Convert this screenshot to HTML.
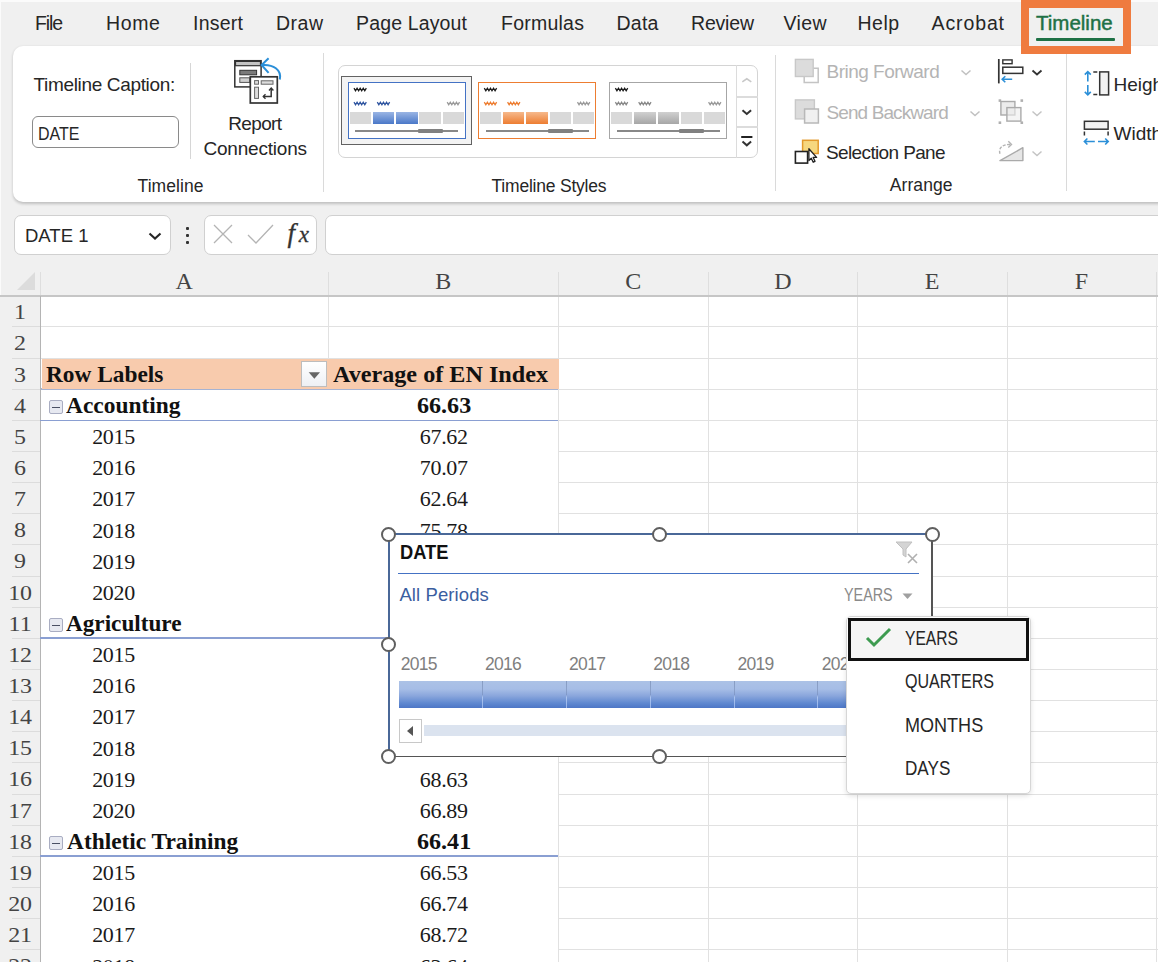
<!DOCTYPE html>
<html><head><meta charset="utf-8"><style>
html,body{margin:0;padding:0;width:1158px;height:962px;overflow:hidden;background:#f0f0f0}
.b{position:absolute}
.t{position:absolute;white-space:nowrap}
</style></head><body>
<div class="b" style="left:0;top:0;width:1158px;height:962px;background:#f0f0f0"></div>
<div class="b" style="left:0.0px;top:0.0px;width:1158.0px;height:2.0px;background:#fbfbfb"></div>
<div class="b" style="left:0.0px;top:0.0px;width:1.0px;height:962.0px;background:#fbfbfb"></div>
<div class="t" style="left:35.0px;top:14.0px;font-size:19.5px;line-height:19.5px;color:#262626;font-weight:normal;font-family:'Liberation Sans', sans-serif;letter-spacing:-1.13px;">File</div>
<div class="t" style="left:106.0px;top:14.0px;font-size:19.5px;line-height:19.5px;color:#262626;font-weight:normal;font-family:'Liberation Sans', sans-serif;letter-spacing:0.64px;">Home</div>
<div class="t" style="left:193.0px;top:14.0px;font-size:19.5px;line-height:19.5px;color:#262626;font-weight:normal;font-family:'Liberation Sans', sans-serif;letter-spacing:0.25px;">Insert</div>
<div class="t" style="left:276.0px;top:14.0px;font-size:19.5px;line-height:19.5px;color:#262626;font-weight:normal;font-family:'Liberation Sans', sans-serif;letter-spacing:0.49px;">Draw</div>
<div class="t" style="left:356.0px;top:14.0px;font-size:19.5px;line-height:19.5px;color:#262626;font-weight:normal;font-family:'Liberation Sans', sans-serif;letter-spacing:0.15px;">Page Layout</div>
<div class="t" style="left:501.0px;top:14.0px;font-size:19.5px;line-height:19.5px;color:#262626;font-weight:normal;font-family:'Liberation Sans', sans-serif;letter-spacing:0.24px;">Formulas</div>
<div class="t" style="left:616.5px;top:14.0px;font-size:19.5px;line-height:19.5px;color:#262626;font-weight:normal;font-family:'Liberation Sans', sans-serif;letter-spacing:0.25px;">Data</div>
<div class="t" style="left:691.0px;top:14.0px;font-size:19.5px;line-height:19.5px;color:#262626;font-weight:normal;font-family:'Liberation Sans', sans-serif;letter-spacing:-0.19px;">Review</div>
<div class="t" style="left:783.5px;top:14.0px;font-size:19.5px;line-height:19.5px;color:#262626;font-weight:normal;font-family:'Liberation Sans', sans-serif;letter-spacing:0.36px;">View</div>
<div class="t" style="left:857.5px;top:14.0px;font-size:19.5px;line-height:19.5px;color:#262626;font-weight:normal;font-family:'Liberation Sans', sans-serif;letter-spacing:0.48px;">Help</div>
<div class="t" style="left:931.5px;top:14.0px;font-size:19.5px;line-height:19.5px;color:#262626;font-weight:normal;font-family:'Liberation Sans', sans-serif;letter-spacing:0.89px;">Acrobat</div>
<div class="b" style="left:12.5px;top:45.5px;width:1160.0px;height:156.0px;background:#fff;border-radius:10px;box-shadow:0 1.5px 3px rgba(0,0,0,0.2)"></div>
<div class="b" style="left:1021.0px;top:0.0px;width:110.0px;height:54.0px;background:#ef7b3f"></div>
<div class="b" style="left:1028.6px;top:8.0px;width:94.4px;height:37.7px;background:#f0f0f0"></div>
<div class="t" style="left:1036.3px;top:13.8px;font-size:19.5px;line-height:19.5px;color:#1e7145;font-weight:normal;font-family:'Liberation Sans', sans-serif;letter-spacing:0px;-webkit-text-stroke:0.45px #1e7145;transform:scaleX(1.0517);transform-origin:0 0;">Timeline</div>
<div class="b" style="left:1036.0px;top:38.2px;width:78.5px;height:3.0px;background:#1e7145;border-radius:1px"></div>
<div class="t" style="left:33.5px;top:75.3px;font-size:19px;line-height:19px;color:#262626;font-weight:normal;font-family:'Liberation Sans', sans-serif;letter-spacing:-0.34px;">Timeline Caption:</div>
<div class="b" style="left:32.0px;top:116.3px;width:146.6px;height:31.8px;background:#fff;border:1px solid #8a8a8a;border-radius:6px;box-sizing:border-box"></div>
<div class="t" style="left:37.6px;top:123.7px;font-size:19px;line-height:19px;color:#262626;font-weight:normal;font-family:'Liberation Sans', sans-serif;letter-spacing:0px;transform:scaleX(0.8417);transform-origin:0 0;">DATE</div>
<div class="b" style="left:190.0px;top:63.0px;width:1.0px;height:96.0px;background:#d6d6d6"></div>
<svg class="b" style="left:225px;top:50px" width="65" height="60" viewBox="0 0 65 60">
<rect x="9.8" y="10.7" width="26.3" height="26.2" fill="#fff" stroke="#333" stroke-width="1.5"/>
<rect x="10.5" y="11.4" width="25" height="4.3" fill="#c4c4c4" stroke="#333" stroke-width="1.2"/>
<rect x="14.8" y="20.3" width="16.8" height="4.5" fill="#7a7a7a" stroke="#333" stroke-width="1"/>
<rect x="14.8" y="27.8" width="10" height="4.6" fill="#d0d0d0" stroke="#555" stroke-width="1"/>
<rect x="25.3" y="26.8" width="27" height="26.2" fill="#fff" stroke="#333" stroke-width="1.7"/>
<rect x="29.6" y="30.6" width="3.9" height="3.6" fill="#ddd" stroke="#666" stroke-width="1"/>
<rect x="36.2" y="30.8" width="11.8" height="3.4" fill="#ddd" stroke="#666" stroke-width="1"/>
<rect x="29.6" y="37.2" width="3.9" height="11.2" fill="#ddd" stroke="#666" stroke-width="1"/>
<path d="M38.3 46.5 H46.2 V38.5" fill="none" stroke="#333" stroke-width="1.5"/>
<path d="M44 40.5 l2.2 -2.4 l2.2 2.4 M40.5 44.3 l-2.2 2.2 l2.2 2.2" fill="none" stroke="#333" stroke-width="1.4"/>
<path d="M54.8 29.5 C57 20 48 14 37 15" fill="none" stroke="#2b8fd8" stroke-width="2"/>
<path d="M43.6 8.3 L36.6 15 L43.6 22.8" fill="none" stroke="#2b8fd8" stroke-width="2"/>
</svg>
<div class="t" style="left:228.3px;top:113.9px;font-size:19px;line-height:19px;color:#262626;font-weight:normal;font-family:'Liberation Sans', sans-serif;letter-spacing:-0.66px;">Report</div>
<div class="t" style="left:203.4px;top:138.9px;font-size:19px;line-height:19px;color:#262626;font-weight:normal;font-family:'Liberation Sans', sans-serif;letter-spacing:-0.2px;">Connections</div>
<div class="t" style="left:137.6px;top:177.5px;font-size:17.5px;line-height:17.5px;color:#262626;font-weight:normal;font-family:'Liberation Sans', sans-serif;letter-spacing:0.05px;">Timeline</div>
<div class="b" style="left:323.0px;top:53.0px;width:1.0px;height:139.0px;background:#dadada"></div>
<div class="b" style="left:338.4px;top:65.3px;width:420.0px;height:92.3px;background:#fff;border:1px solid #d4d4d4;border-radius:7px;box-sizing:border-box"></div>
<div class="b" style="left:736.0px;top:65.3px;width:1.3px;height:92.3px;background:#dcdcdc"></div>
<div class="b" style="left:737.0px;top:96.4px;width:21.0px;height:2.0px;background:#dcdcdc"></div>
<div class="b" style="left:737.0px;top:125.9px;width:21.0px;height:2.0px;background:#dcdcdc"></div>
<svg class="b" style="left:737px;top:66px" width="21" height="91" viewBox="0 0 21 91"><path d="M5.3 15.8 l4.5 -3 l4.5 3" fill="none" stroke="#c8c8c8" stroke-width="1.6"/><path d="M5.5 44.2 l4.3 3.8 l4.3 -3.8" fill="none" stroke="#333" stroke-width="2"/><path d="M4.2 71 h11.2" stroke="#222" stroke-width="2"/><path d="M5.5 75.5 l4.3 3.8 l4.3 -3.8" fill="none" stroke="#333" stroke-width="2"/></svg>
<div class="b" style="left:341.4px;top:75.9px;width:130.3px;height:69.5px;background:#f3f3f3;border:1.7px solid #626262;box-sizing:border-box"></div>
<div class="b" style="left:347.9px;top:81.8px;width:118.0px;height:57.0px;background:#fff;border:1.5px solid #4472c4;box-sizing:border-box"></div>
<svg class="b" style="left:0;top:0" width="800" height="200"><path d="M354.0 88.2 l1.54 2.6 l1.54 -2.6 l1.54 2.6 l1.54 -2.6 l1.54 2.6 l1.54 -2.6 l1.54 2.6 l1.54 -2.6" fill="none" stroke="#1a1a1a" stroke-width="1.3"/></svg>
<svg class="b" style="left:0;top:0" width="800" height="200"><path d="M354.0 102.2 l1.54 2.6 l1.54 -2.6 l1.54 2.6 l1.54 -2.6 l1.54 2.6 l1.54 -2.6 l1.54 2.6 l1.54 -2.6" fill="none" stroke="#2f55a0" stroke-width="1.3"/></svg>
<svg class="b" style="left:0;top:0" width="800" height="200"><path d="M377.3 102.2 l1.54 2.6 l1.54 -2.6 l1.54 2.6 l1.54 -2.6 l1.54 2.6 l1.54 -2.6 l1.54 2.6 l1.54 -2.6" fill="none" stroke="#2f55a0" stroke-width="1.3"/></svg>
<svg class="b" style="left:0;top:0" width="800" height="200"><path d="M447.2 102.2 l1.54 2.6 l1.54 -2.6 l1.54 2.6 l1.54 -2.6 l1.54 2.6 l1.54 -2.6 l1.54 2.6 l1.54 -2.6" fill="none" stroke="#9a9a9a" stroke-width="1.3"/></svg>
<div class="b" style="left:349.9px;top:111.5px;width:21.1px;height:12.4px;background:#d9d9d9"></div>
<div class="b" style="left:372.6px;top:111.5px;width:21.6px;height:12.4px;background:linear-gradient(#9ab5e4,#4a78c8)"></div>
<div class="b" style="left:396.1px;top:111.5px;width:21.6px;height:12.4px;background:linear-gradient(#9ab5e4,#4a78c8)"></div>
<div class="b" style="left:419.4px;top:111.5px;width:21.4px;height:12.4px;background:#d9d9d9"></div>
<div class="b" style="left:443.0px;top:111.5px;width:20.8px;height:12.4px;background:#d9d9d9"></div>
<div class="b" style="left:355.2px;top:130.4px;width:103.1px;height:1.5px;background:#888"></div>
<div class="b" style="left:417.9px;top:128.5px;width:24.9px;height:4.4px;background:#808080;border-radius:1px"></div>
<div class="b" style="left:478.2px;top:81.8px;width:118.0px;height:57.0px;background:#fff;border:1.5px solid #ed7d31;box-sizing:border-box"></div>
<svg class="b" style="left:0;top:0" width="800" height="200"><path d="M484.3 88.2 l1.54 2.6 l1.54 -2.6 l1.54 2.6 l1.54 -2.6 l1.54 2.6 l1.54 -2.6 l1.54 2.6 l1.54 -2.6" fill="none" stroke="#1a1a1a" stroke-width="1.3"/></svg>
<svg class="b" style="left:0;top:0" width="800" height="200"><path d="M484.3 102.2 l1.54 2.6 l1.54 -2.6 l1.54 2.6 l1.54 -2.6 l1.54 2.6 l1.54 -2.6 l1.54 2.6 l1.54 -2.6" fill="none" stroke="#ed7d31" stroke-width="1.3"/></svg>
<svg class="b" style="left:0;top:0" width="800" height="200"><path d="M507.6 102.2 l1.54 2.6 l1.54 -2.6 l1.54 2.6 l1.54 -2.6 l1.54 2.6 l1.54 -2.6 l1.54 2.6 l1.54 -2.6" fill="none" stroke="#ed7d31" stroke-width="1.3"/></svg>
<svg class="b" style="left:0;top:0" width="800" height="200"><path d="M577.5 102.2 l1.54 2.6 l1.54 -2.6 l1.54 2.6 l1.54 -2.6 l1.54 2.6 l1.54 -2.6 l1.54 2.6 l1.54 -2.6" fill="none" stroke="#9a9a9a" stroke-width="1.3"/></svg>
<div class="b" style="left:480.2px;top:111.5px;width:21.1px;height:12.4px;background:#d9d9d9"></div>
<div class="b" style="left:502.9px;top:111.5px;width:21.6px;height:12.4px;background:linear-gradient(#f6b98c,#ed7d31)"></div>
<div class="b" style="left:526.4px;top:111.5px;width:21.6px;height:12.4px;background:linear-gradient(#f6b98c,#ed7d31)"></div>
<div class="b" style="left:549.7px;top:111.5px;width:21.4px;height:12.4px;background:#d9d9d9"></div>
<div class="b" style="left:573.3px;top:111.5px;width:20.8px;height:12.4px;background:#d9d9d9"></div>
<div class="b" style="left:485.5px;top:130.4px;width:103.1px;height:1.5px;background:#888"></div>
<div class="b" style="left:548.2px;top:128.5px;width:24.9px;height:4.4px;background:#808080;border-radius:1px"></div>
<div class="b" style="left:609.3px;top:81.8px;width:118.0px;height:57.0px;background:#fff;border:1.5px solid #a6a6a6;box-sizing:border-box"></div>
<svg class="b" style="left:0;top:0" width="800" height="200"><path d="M615.4 88.2 l1.54 2.6 l1.54 -2.6 l1.54 2.6 l1.54 -2.6 l1.54 2.6 l1.54 -2.6 l1.54 2.6 l1.54 -2.6" fill="none" stroke="#1a1a1a" stroke-width="1.3"/></svg>
<svg class="b" style="left:0;top:0" width="800" height="200"><path d="M615.4 102.2 l1.54 2.6 l1.54 -2.6 l1.54 2.6 l1.54 -2.6 l1.54 2.6 l1.54 -2.6 l1.54 2.6 l1.54 -2.6" fill="none" stroke="#888" stroke-width="1.3"/></svg>
<svg class="b" style="left:0;top:0" width="800" height="200"><path d="M638.7 102.2 l1.54 2.6 l1.54 -2.6 l1.54 2.6 l1.54 -2.6 l1.54 2.6 l1.54 -2.6 l1.54 2.6 l1.54 -2.6" fill="none" stroke="#888" stroke-width="1.3"/></svg>
<svg class="b" style="left:0;top:0" width="800" height="200"><path d="M708.6 102.2 l1.54 2.6 l1.54 -2.6 l1.54 2.6 l1.54 -2.6 l1.54 2.6 l1.54 -2.6 l1.54 2.6 l1.54 -2.6" fill="none" stroke="#9a9a9a" stroke-width="1.3"/></svg>
<div class="b" style="left:611.3px;top:111.5px;width:21.1px;height:12.4px;background:#d9d9d9"></div>
<div class="b" style="left:634.0px;top:111.5px;width:21.6px;height:12.4px;background:linear-gradient(#d0d0d0,#a6a6a6)"></div>
<div class="b" style="left:657.5px;top:111.5px;width:21.6px;height:12.4px;background:linear-gradient(#d0d0d0,#a6a6a6)"></div>
<div class="b" style="left:680.8px;top:111.5px;width:21.4px;height:12.4px;background:#d9d9d9"></div>
<div class="b" style="left:704.4px;top:111.5px;width:20.8px;height:12.4px;background:#d9d9d9"></div>
<div class="b" style="left:616.6px;top:130.4px;width:103.1px;height:1.5px;background:#888"></div>
<div class="b" style="left:679.3px;top:128.5px;width:24.9px;height:4.4px;background:#808080;border-radius:1px"></div>
<div class="t" style="left:491.5px;top:177.7px;font-size:17.5px;line-height:17.5px;color:#262626;font-weight:normal;font-family:'Liberation Sans', sans-serif;letter-spacing:-0.21px;">Timeline Styles</div>
<div class="b" style="left:774.7px;top:55.0px;width:1.0px;height:136.0px;background:#dadada"></div>
<svg class="b" style="left:788px;top:52px" width="40" height="118" viewBox="0 0 40 118">
<path d="M25.2 16.3 H30.2 V30.5 H16.2 V24.5" fill="none" stroke="#c4c4c4" stroke-width="1.5"/>
<rect x="7.4" y="7.4" width="17.8" height="17.1" fill="#dcdcdc" stroke="#c8c8c8" stroke-width="1.4"/>
<rect x="7.4" y="47.9" width="19" height="19" fill="#dcdcdc" stroke="#c8c8c8" stroke-width="1.4"/>
<rect x="16.6" y="57" width="13.8" height="14" fill="#f0f0f0" stroke="#b8b8b8" stroke-width="1.5"/>
<rect x="14.6" y="88.3" width="15.6" height="13.2" fill="#f6d77e" stroke="#e39a2c" stroke-width="1.5"/>
<rect x="7.4" y="99.5" width="12.2" height="11.6" fill="#fff" stroke="#222" stroke-width="1.6"/>
<path d="M20.9 96.8 V108.5 L23.3 106.2 L25.2 110.2 L27 109.3 L25.2 105.4 H28.6 Z" fill="#fff" stroke="#222" stroke-width="1.3" stroke-linejoin="round"/>
</svg>
<div class="t" style="left:826.5px;top:62.4px;font-size:19px;line-height:19px;color:#b4b4b4;font-weight:normal;font-family:'Liberation Sans', sans-serif;letter-spacing:-0.51px;">Bring Forward</div>
<div class="t" style="left:826.5px;top:102.6px;font-size:19px;line-height:19px;color:#b4b4b4;font-weight:normal;font-family:'Liberation Sans', sans-serif;letter-spacing:-0.9px;">Send Backward</div>
<div class="t" style="left:826.0px;top:142.7px;font-size:19px;line-height:19px;color:#262626;font-weight:normal;font-family:'Liberation Sans', sans-serif;letter-spacing:-0.63px;">Selection Pane</div>
<svg class="b" style="left:959.5px;top:69px" width="12" height="8" viewBox="0 0 12 8"><path d="M1.5 1.5 l4.5 4 l4.5 -4" fill="none" stroke="#c0c0c0" stroke-width="1.5"/></svg>
<svg class="b" style="left:968.5px;top:109.5px" width="12" height="8" viewBox="0 0 12 8"><path d="M1.5 1.5 l4.5 4 l4.5 -4" fill="none" stroke="#c0c0c0" stroke-width="1.5"/></svg>
<svg class="b" style="left:1030.5px;top:68.5px" width="12" height="8" viewBox="0 0 12 8"><path d="M1.5 1.5 l4.5 4 l4.5 -4" fill="none" stroke="#333" stroke-width="1.8"/></svg>
<svg class="b" style="left:1030.5px;top:109.5px" width="12" height="8" viewBox="0 0 12 8"><path d="M1.5 1.5 l4.5 4 l4.5 -4" fill="none" stroke="#c4c4c4" stroke-width="1.5"/></svg>
<svg class="b" style="left:1030.5px;top:149.5px" width="12" height="8" viewBox="0 0 12 8"><path d="M1.5 1.5 l4.5 4 l4.5 -4" fill="none" stroke="#c4c4c4" stroke-width="1.5"/></svg>
<svg class="b" style="left:990px;top:52px" width="40" height="118" viewBox="0 0 40 118">
<path d="M8.8 7 V31.4" stroke="#333" stroke-width="1.7"/>
<rect x="12.8" y="7.9" width="9.3" height="3.8" fill="#fff" stroke="#333" stroke-width="1.4"/>
<rect x="12.8" y="15.2" width="20" height="6.2" fill="#fff" stroke="#333" stroke-width="1.5"/>
<path d="M22.2 27.2 H12.3 M15.3 24.2 L12.2 27.2 L15.3 30.2" fill="none" stroke="#2b8fd8" stroke-width="1.6"/>
<g fill="#b0b0b0"><rect x="8.6" y="47.3" width="2.6" height="2.6"/><rect x="30.5" y="47.3" width="2.6" height="2.6"/><rect x="8.6" y="69.4" width="2.6" height="2.6"/><rect x="30.5" y="69.4" width="2.6" height="2.6"/></g>
<rect x="10.9" y="49.5" width="14" height="13.5" fill="#ececec" stroke="#aaa" stroke-width="1.4"/>
<rect x="16.9" y="55.6" width="14" height="13.5" fill="#ececec" fill-opacity="0.6" stroke="#aaa" stroke-width="1.4"/>
<path d="M10 108.6 H32.9 V95.7 Z" fill="#e6e6e6" stroke="#aaa" stroke-width="1.4" stroke-linejoin="round"/>
<path d="M10 101.8 C8 96 13 92 20.5 92.5" fill="none" stroke="#b4b4b4" stroke-width="1.4" stroke-dasharray="3 1.5"/>
<path d="M18.3 89.3 L21.5 92.6 L18.3 95.6" fill="none" stroke="#b4b4b4" stroke-width="1.4"/>
</svg>
<div class="t" style="left:889.7px;top:177.2px;font-size:17.5px;line-height:17.5px;color:#262626;font-weight:normal;font-family:'Liberation Sans', sans-serif;letter-spacing:0.1px;">Arrange</div>
<div class="b" style="left:1065.5px;top:54.0px;width:1.0px;height:137.0px;background:#dadada"></div>
<svg class="b" style="left:1075px;top:60px" width="40" height="90" viewBox="0 0 40 90">
<g stroke="#2b8fd8" stroke-width="1.6" fill="none">
<path d="M12.8 12 V21.5 M9.8 14.6 L12.8 11.6 L15.8 14.6"/>
<path d="M12.8 25 V34.6 M9.8 31.9 L12.8 34.9 L15.8 31.9"/>
<path d="M9.4 81.5 H19.8 M12.4 78.5 L9.4 81.5 L12.4 84.5"/>
<path d="M23 81.5 H33.2 M30.2 78.5 L33.2 81.5 L30.2 84.5"/>
</g>
<g stroke="#333" stroke-width="1.5">
<rect x="24.7" y="11.9" width="8.9" height="23" fill="#f2f2f2"/>
<path d="M18.3 11.9 h4 M18.3 34.6 h4" fill="none"/>
<rect x="9.4" y="61.3" width="23.7" height="7.9" fill="#f2f2f2"/>
<path d="M9.4 71.5 v4 M33.1 71.5 v4" fill="none"/>
</g>
</svg>
<div class="t" style="left:1113.5px;top:75.0px;font-size:19px;line-height:19px;color:#262626;font-weight:normal;font-family:'Liberation Sans', sans-serif;letter-spacing:0px;">Height</div>
<div class="t" style="left:1113.5px;top:124.4px;font-size:19px;line-height:19px;color:#262626;font-weight:normal;font-family:'Liberation Sans', sans-serif;letter-spacing:0px;">Width</div>
<div class="b" style="left:13.5px;top:215.0px;width:157.0px;height:39.5px;background:#fff;border:1.2px solid #d0d0d0;border-radius:7px;box-sizing:border-box"></div>
<div class="t" style="left:25.0px;top:225.7px;font-size:19px;line-height:19px;color:#262626;font-weight:normal;font-family:'Liberation Sans', sans-serif;letter-spacing:0px;transform:scaleX(0.9743);transform-origin:0 0;">DATE 1</div>
<svg class="b" style="left:147px;top:230px" width="16" height="12" viewBox="0 0 16 12"><path d="M2.5 3.5 l5.5 5 l5.5 -5" fill="none" stroke="#262626" stroke-width="2.1"/></svg>
<div class="b" style="left:185.5px;top:227.0px;width:3.0px;height:3.0px;background:#333;border-radius:1px"></div>
<div class="b" style="left:185.5px;top:234.0px;width:3.0px;height:3.0px;background:#333;border-radius:1px"></div>
<div class="b" style="left:185.5px;top:241.0px;width:3.0px;height:3.0px;background:#333;border-radius:1px"></div>
<div class="b" style="left:203.5px;top:215.0px;width:113.5px;height:39.5px;background:#fff;border:1.2px solid #d0d0d0;border-radius:7px;box-sizing:border-box"></div>
<svg class="b" style="left:210px;top:222px" width="70" height="26" viewBox="0 0 70 26"><path d="M4 3 l18 18 M22 3 l-18 18" stroke="#b4b4b4" stroke-width="1.3"/><path d="M38 13 l8 8 l17 -18" fill="none" stroke="#b4b4b4" stroke-width="1.3"/></svg>
<div class="t" style="left:287.5px;top:219.7px;font-size:27px;line-height:27px;color:#333;font-weight:normal;font-family:'Liberation Serif', serif;letter-spacing:0px;-webkit-text-stroke:0.3px #333;font-style:italic;">f</div>
<div class="t" style="left:298.8px;top:223.0px;font-size:23px;line-height:23px;color:#333;font-weight:normal;font-family:'Liberation Serif', serif;letter-spacing:0px;-webkit-text-stroke:0.3px #333;font-style:italic;">x</div>
<div class="b" style="left:325.4px;top:215.0px;width:840.0px;height:39.5px;background:#fff;border:1.2px solid #d0d0d0;border-radius:7px;box-sizing:border-box"></div>
<div class="b" style="left:40.3px;top:295.8px;width:1120.0px;height:666.2px;background:#fff"></div>
<div class="b" style="left:0.0px;top:295.8px;width:40.3px;height:666.2px;background:#f0f0f0"></div>
<div class="b" style="left:1.0px;top:295.8px;width:0.0px;height:0.0px;"></div>
<svg class="b" style="left:16px;top:272px" width="20" height="19" viewBox="0 0 20 19"><path d="M19 0 v18 h-18 z" fill="#dcdcdc"/></svg>
<div class="t" style="left:-15.8px;width:400px;text-align:center;top:269.1px;font-size:24px;line-height:24px;color:#444;font-weight:normal;font-family:'Liberation Serif', serif;letter-spacing:0px;">A</div>
<div class="t" style="left:243.2px;width:400px;text-align:center;top:269.1px;font-size:24px;line-height:24px;color:#444;font-weight:normal;font-family:'Liberation Serif', serif;letter-spacing:0px;">B</div>
<div class="t" style="left:433.2px;width:400px;text-align:center;top:269.1px;font-size:24px;line-height:24px;color:#444;font-weight:normal;font-family:'Liberation Serif', serif;letter-spacing:0px;">C</div>
<div class="t" style="left:582.8px;width:400px;text-align:center;top:269.1px;font-size:24px;line-height:24px;color:#444;font-weight:normal;font-family:'Liberation Serif', serif;letter-spacing:0px;">D</div>
<div class="t" style="left:732.2px;width:400px;text-align:center;top:269.1px;font-size:24px;line-height:24px;color:#444;font-weight:normal;font-family:'Liberation Serif', serif;letter-spacing:0px;">E</div>
<div class="t" style="left:881.5px;width:400px;text-align:center;top:269.1px;font-size:24px;line-height:24px;color:#444;font-weight:normal;font-family:'Liberation Serif', serif;letter-spacing:0px;">F</div>
<div class="b" style="left:327.5px;top:272.0px;width:1.0px;height:23.5px;background:#dedede"></div>
<div class="b" style="left:558.0px;top:272.0px;width:1.0px;height:23.5px;background:#dedede"></div>
<div class="b" style="left:707.5px;top:272.0px;width:1.0px;height:23.5px;background:#dedede"></div>
<div class="b" style="left:857.0px;top:272.0px;width:1.0px;height:23.5px;background:#dedede"></div>
<div class="b" style="left:1006.5px;top:272.0px;width:1.0px;height:23.5px;background:#dedede"></div>
<div class="b" style="left:1155.5px;top:272.0px;width:1.0px;height:23.5px;background:#dedede"></div>
<div class="b" style="left:40.0px;top:272.0px;width:1.0px;height:23.5px;background:#dedede"></div>
<div class="b" style="left:40.3px;top:326.4px;width:1120.0px;height:1.0px;background:#e1e1e1"></div>
<div class="b" style="left:12.0px;top:326.4px;width:28.3px;height:1.0px;background:#dcdcdc"></div>
<div class="b" style="left:40.3px;top:357.6px;width:1120.0px;height:1.0px;background:#e1e1e1"></div>
<div class="b" style="left:12.0px;top:357.6px;width:28.3px;height:1.0px;background:#dcdcdc"></div>
<div class="b" style="left:40.3px;top:388.4px;width:518.2px;height:1.8px;background:#a6b3d2"></div>
<div class="b" style="left:558.5px;top:388.7px;width:600.0px;height:1.0px;background:#e1e1e1"></div>
<div class="b" style="left:12.0px;top:388.7px;width:28.3px;height:1.0px;background:#dcdcdc"></div>
<div class="b" style="left:558.5px;top:419.9px;width:600.0px;height:1.0px;background:#e1e1e1"></div>
<div class="b" style="left:12.0px;top:419.9px;width:28.3px;height:1.0px;background:#dcdcdc"></div>
<div class="b" style="left:558.5px;top:451.0px;width:600.0px;height:1.0px;background:#e1e1e1"></div>
<div class="b" style="left:12.0px;top:451.0px;width:28.3px;height:1.0px;background:#dcdcdc"></div>
<div class="b" style="left:558.5px;top:482.1px;width:600.0px;height:1.0px;background:#e1e1e1"></div>
<div class="b" style="left:12.0px;top:482.1px;width:28.3px;height:1.0px;background:#dcdcdc"></div>
<div class="b" style="left:558.5px;top:513.3px;width:600.0px;height:1.0px;background:#e1e1e1"></div>
<div class="b" style="left:12.0px;top:513.3px;width:28.3px;height:1.0px;background:#dcdcdc"></div>
<div class="b" style="left:558.5px;top:544.4px;width:600.0px;height:1.0px;background:#e1e1e1"></div>
<div class="b" style="left:12.0px;top:544.4px;width:28.3px;height:1.0px;background:#dcdcdc"></div>
<div class="b" style="left:558.5px;top:575.6px;width:600.0px;height:1.0px;background:#e1e1e1"></div>
<div class="b" style="left:12.0px;top:575.6px;width:28.3px;height:1.0px;background:#dcdcdc"></div>
<div class="b" style="left:558.5px;top:606.7px;width:600.0px;height:1.0px;background:#e1e1e1"></div>
<div class="b" style="left:12.0px;top:606.7px;width:28.3px;height:1.0px;background:#dcdcdc"></div>
<div class="b" style="left:558.5px;top:637.8px;width:600.0px;height:1.0px;background:#e1e1e1"></div>
<div class="b" style="left:12.0px;top:637.8px;width:28.3px;height:1.0px;background:#dcdcdc"></div>
<div class="b" style="left:558.5px;top:669.0px;width:600.0px;height:1.0px;background:#e1e1e1"></div>
<div class="b" style="left:12.0px;top:669.0px;width:28.3px;height:1.0px;background:#dcdcdc"></div>
<div class="b" style="left:558.5px;top:700.1px;width:600.0px;height:1.0px;background:#e1e1e1"></div>
<div class="b" style="left:12.0px;top:700.1px;width:28.3px;height:1.0px;background:#dcdcdc"></div>
<div class="b" style="left:558.5px;top:731.3px;width:600.0px;height:1.0px;background:#e1e1e1"></div>
<div class="b" style="left:12.0px;top:731.3px;width:28.3px;height:1.0px;background:#dcdcdc"></div>
<div class="b" style="left:558.5px;top:762.4px;width:600.0px;height:1.0px;background:#e1e1e1"></div>
<div class="b" style="left:12.0px;top:762.4px;width:28.3px;height:1.0px;background:#dcdcdc"></div>
<div class="b" style="left:558.5px;top:793.5px;width:600.0px;height:1.0px;background:#e1e1e1"></div>
<div class="b" style="left:12.0px;top:793.5px;width:28.3px;height:1.0px;background:#dcdcdc"></div>
<div class="b" style="left:558.5px;top:824.7px;width:600.0px;height:1.0px;background:#e1e1e1"></div>
<div class="b" style="left:12.0px;top:824.7px;width:28.3px;height:1.0px;background:#dcdcdc"></div>
<div class="b" style="left:558.5px;top:855.8px;width:600.0px;height:1.0px;background:#e1e1e1"></div>
<div class="b" style="left:12.0px;top:855.8px;width:28.3px;height:1.0px;background:#dcdcdc"></div>
<div class="b" style="left:558.5px;top:887.0px;width:600.0px;height:1.0px;background:#e1e1e1"></div>
<div class="b" style="left:12.0px;top:887.0px;width:28.3px;height:1.0px;background:#dcdcdc"></div>
<div class="b" style="left:558.5px;top:918.1px;width:600.0px;height:1.0px;background:#e1e1e1"></div>
<div class="b" style="left:12.0px;top:918.1px;width:28.3px;height:1.0px;background:#dcdcdc"></div>
<div class="b" style="left:558.5px;top:949.2px;width:600.0px;height:1.0px;background:#e1e1e1"></div>
<div class="b" style="left:12.0px;top:949.2px;width:28.3px;height:1.0px;background:#dcdcdc"></div>
<div class="b" style="left:558.5px;top:980.4px;width:600.0px;height:1.0px;background:#e1e1e1"></div>
<div class="b" style="left:12.0px;top:980.4px;width:28.3px;height:1.0px;background:#dcdcdc"></div>
<div class="b" style="left:558.0px;top:295.8px;width:1.0px;height:666.2px;background:#e1e1e1"></div>
<div class="b" style="left:707.5px;top:295.8px;width:1.0px;height:666.2px;background:#e1e1e1"></div>
<div class="b" style="left:857.0px;top:295.8px;width:1.0px;height:666.2px;background:#e1e1e1"></div>
<div class="b" style="left:1006.5px;top:295.8px;width:1.0px;height:666.2px;background:#e1e1e1"></div>
<div class="b" style="left:1155.5px;top:295.8px;width:1.0px;height:666.2px;background:#e1e1e1"></div>
<div class="b" style="left:327.5px;top:295.8px;width:1.0px;height:62.3px;background:#e1e1e1"></div>
<div class="b" style="left:0.0px;top:294.8px;width:1158.0px;height:2.0px;background:#c6c6c6"></div>
<div class="b" style="left:40.0px;top:295.8px;width:1.3px;height:666.2px;background:#b4b4b4"></div>
<div class="b" style="left:0;top:0;transform:translateX(20.1px) scaleX(1.14);transform-origin:0 0;">
<div class="t" style="left:-200.0px;width:400px;text-align:center;top:302.2px;font-size:21px;line-height:21px;color:#444;font-weight:normal;font-family:'Liberation Serif', serif;letter-spacing:0px;">1</div>
</div>
<div class="b" style="left:0;top:0;transform:translateX(20.1px) scaleX(1.14);transform-origin:0 0;">
<div class="t" style="left:-200.0px;width:400px;text-align:center;top:333.4px;font-size:21px;line-height:21px;color:#444;font-weight:normal;font-family:'Liberation Serif', serif;letter-spacing:0px;">2</div>
</div>
<div class="b" style="left:0;top:0;transform:translateX(20.1px) scaleX(1.14);transform-origin:0 0;">
<div class="t" style="left:-200.0px;width:400px;text-align:center;top:364.5px;font-size:21px;line-height:21px;color:#444;font-weight:normal;font-family:'Liberation Serif', serif;letter-spacing:0px;">3</div>
</div>
<div class="b" style="left:0;top:0;transform:translateX(20.1px) scaleX(1.14);transform-origin:0 0;">
<div class="t" style="left:-200.0px;width:400px;text-align:center;top:395.6px;font-size:21px;line-height:21px;color:#444;font-weight:normal;font-family:'Liberation Serif', serif;letter-spacing:0px;">4</div>
</div>
<div class="b" style="left:0;top:0;transform:translateX(20.1px) scaleX(1.14);transform-origin:0 0;">
<div class="t" style="left:-200.0px;width:400px;text-align:center;top:426.8px;font-size:21px;line-height:21px;color:#444;font-weight:normal;font-family:'Liberation Serif', serif;letter-spacing:0px;">5</div>
</div>
<div class="b" style="left:0;top:0;transform:translateX(20.1px) scaleX(1.14);transform-origin:0 0;">
<div class="t" style="left:-200.0px;width:400px;text-align:center;top:457.9px;font-size:21px;line-height:21px;color:#444;font-weight:normal;font-family:'Liberation Serif', serif;letter-spacing:0px;">6</div>
</div>
<div class="b" style="left:0;top:0;transform:translateX(20.1px) scaleX(1.14);transform-origin:0 0;">
<div class="t" style="left:-200.0px;width:400px;text-align:center;top:489.1px;font-size:21px;line-height:21px;color:#444;font-weight:normal;font-family:'Liberation Serif', serif;letter-spacing:0px;">7</div>
</div>
<div class="b" style="left:0;top:0;transform:translateX(20.1px) scaleX(1.14);transform-origin:0 0;">
<div class="t" style="left:-200.0px;width:400px;text-align:center;top:520.2px;font-size:21px;line-height:21px;color:#444;font-weight:normal;font-family:'Liberation Serif', serif;letter-spacing:0px;">8</div>
</div>
<div class="b" style="left:0;top:0;transform:translateX(20.1px) scaleX(1.14);transform-origin:0 0;">
<div class="t" style="left:-200.0px;width:400px;text-align:center;top:551.3px;font-size:21px;line-height:21px;color:#444;font-weight:normal;font-family:'Liberation Serif', serif;letter-spacing:0px;">9</div>
</div>
<div class="b" style="left:0;top:0;transform:translateX(20.1px) scaleX(1.14);transform-origin:0 0;">
<div class="t" style="left:-200.0px;width:400px;text-align:center;top:582.5px;font-size:21px;line-height:21px;color:#444;font-weight:normal;font-family:'Liberation Serif', serif;letter-spacing:0px;">10</div>
</div>
<div class="b" style="left:0;top:0;transform:translateX(20.1px) scaleX(1.14);transform-origin:0 0;">
<div class="t" style="left:-200.0px;width:400px;text-align:center;top:613.6px;font-size:21px;line-height:21px;color:#444;font-weight:normal;font-family:'Liberation Serif', serif;letter-spacing:0px;">11</div>
</div>
<div class="b" style="left:0;top:0;transform:translateX(20.1px) scaleX(1.14);transform-origin:0 0;">
<div class="t" style="left:-200.0px;width:400px;text-align:center;top:644.8px;font-size:21px;line-height:21px;color:#444;font-weight:normal;font-family:'Liberation Serif', serif;letter-spacing:0px;">12</div>
</div>
<div class="b" style="left:0;top:0;transform:translateX(20.1px) scaleX(1.14);transform-origin:0 0;">
<div class="t" style="left:-200.0px;width:400px;text-align:center;top:675.9px;font-size:21px;line-height:21px;color:#444;font-weight:normal;font-family:'Liberation Serif', serif;letter-spacing:0px;">13</div>
</div>
<div class="b" style="left:0;top:0;transform:translateX(20.1px) scaleX(1.14);transform-origin:0 0;">
<div class="t" style="left:-200.0px;width:400px;text-align:center;top:707.0px;font-size:21px;line-height:21px;color:#444;font-weight:normal;font-family:'Liberation Serif', serif;letter-spacing:0px;">14</div>
</div>
<div class="b" style="left:0;top:0;transform:translateX(20.1px) scaleX(1.14);transform-origin:0 0;">
<div class="t" style="left:-200.0px;width:400px;text-align:center;top:738.2px;font-size:21px;line-height:21px;color:#444;font-weight:normal;font-family:'Liberation Serif', serif;letter-spacing:0px;">15</div>
</div>
<div class="b" style="left:0;top:0;transform:translateX(20.1px) scaleX(1.14);transform-origin:0 0;">
<div class="t" style="left:-200.0px;width:400px;text-align:center;top:769.3px;font-size:21px;line-height:21px;color:#444;font-weight:normal;font-family:'Liberation Serif', serif;letter-spacing:0px;">16</div>
</div>
<div class="b" style="left:0;top:0;transform:translateX(20.1px) scaleX(1.14);transform-origin:0 0;">
<div class="t" style="left:-200.0px;width:400px;text-align:center;top:800.5px;font-size:21px;line-height:21px;color:#444;font-weight:normal;font-family:'Liberation Serif', serif;letter-spacing:0px;">17</div>
</div>
<div class="b" style="left:0;top:0;transform:translateX(20.1px) scaleX(1.14);transform-origin:0 0;">
<div class="t" style="left:-200.0px;width:400px;text-align:center;top:831.6px;font-size:21px;line-height:21px;color:#444;font-weight:normal;font-family:'Liberation Serif', serif;letter-spacing:0px;">18</div>
</div>
<div class="b" style="left:0;top:0;transform:translateX(20.1px) scaleX(1.14);transform-origin:0 0;">
<div class="t" style="left:-200.0px;width:400px;text-align:center;top:862.7px;font-size:21px;line-height:21px;color:#444;font-weight:normal;font-family:'Liberation Serif', serif;letter-spacing:0px;">19</div>
</div>
<div class="b" style="left:0;top:0;transform:translateX(20.1px) scaleX(1.14);transform-origin:0 0;">
<div class="t" style="left:-200.0px;width:400px;text-align:center;top:893.9px;font-size:21px;line-height:21px;color:#444;font-weight:normal;font-family:'Liberation Serif', serif;letter-spacing:0px;">20</div>
</div>
<div class="b" style="left:0;top:0;transform:translateX(20.1px) scaleX(1.14);transform-origin:0 0;">
<div class="t" style="left:-200.0px;width:400px;text-align:center;top:925.0px;font-size:21px;line-height:21px;color:#444;font-weight:normal;font-family:'Liberation Serif', serif;letter-spacing:0px;">21</div>
</div>
<div class="b" style="left:0;top:0;transform:translateX(20.1px) scaleX(1.14);transform-origin:0 0;">
<div class="t" style="left:-200.0px;width:400px;text-align:center;top:956.2px;font-size:21px;line-height:21px;color:#444;font-weight:normal;font-family:'Liberation Serif', serif;letter-spacing:0px;">22</div>
</div>
<div class="b" style="left:41.5px;top:358.6px;width:517.0px;height:30.6px;background:#f8cbad"></div>
<div class="t" style="left:45.6px;top:362.7px;font-size:23.5px;line-height:23.5px;color:#111;font-weight:bold;font-family:'Liberation Serif', serif;letter-spacing:0px;transform:scaleX(0.9932);transform-origin:0 0;">Row Labels</div>
<div class="b" style="left:301.4px;top:361.1px;width:25.3px;height:25.5px;background:linear-gradient(#fff,#eef0f4);border:1.3px solid #bdbdbd;box-sizing:border-box"></div>
<svg class="b" style="left:308px;top:371.6px" width="13" height="8" viewBox="0 0 13 8"><path d="M0.7 0.3 h11.3 l-5.65 6.5 z" fill="#666"/></svg>
<div class="t" style="left:333.2px;top:362.7px;font-size:23.5px;line-height:23.5px;color:#111;font-weight:bold;font-family:'Liberation Serif', serif;letter-spacing:0px;transform:scaleX(1.0285);transform-origin:0 0;">Average of EN Index</div>
<div class="b" style="left:40.3px;top:419.5px;width:518.2px;height:1.2px;background:#8a9fd2"></div>
<div class="b" style="left:49.0px;top:400.3px;width:13.8px;height:13.3px;background:#e7e9f1;border:1.2px solid #a9adc2;border-radius:2px;box-sizing:border-box"></div>
<div class="b" style="left:51.9px;top:406.5px;width:8.0px;height:1.3px;background:#4a5064"></div>
<div class="t" style="left:66.3px;top:394.2px;font-size:23px;line-height:23px;color:#111;font-weight:bold;font-family:'Liberation Serif', serif;letter-spacing:0px;transform:scaleX(1.0180);transform-origin:0 0;">Accounting</div>
<div class="t" style="left:416.8px;top:394.6px;font-size:22.5px;line-height:22.5px;color:#111;font-weight:bold;font-family:'Liberation Serif', serif;letter-spacing:0px;transform:scaleX(1.0706);transform-origin:0 0;">66.63</div>
<div class="t" style="left:92.2px;top:426.1px;font-size:22px;line-height:22px;color:#1a1a1a;font-weight:normal;font-family:'Liberation Serif', serif;letter-spacing:-0.33px;">2015</div>
<div class="t" style="left:419.7px;top:426.1px;font-size:22px;line-height:22px;color:#1a1a1a;font-weight:normal;font-family:'Liberation Serif', serif;letter-spacing:-0.28px;">67.62</div>
<div class="t" style="left:92.2px;top:457.3px;font-size:22px;line-height:22px;color:#1a1a1a;font-weight:normal;font-family:'Liberation Serif', serif;letter-spacing:-0.33px;">2016</div>
<div class="t" style="left:419.7px;top:457.3px;font-size:22px;line-height:22px;color:#1a1a1a;font-weight:normal;font-family:'Liberation Serif', serif;letter-spacing:-0.28px;">70.07</div>
<div class="t" style="left:92.2px;top:488.4px;font-size:22px;line-height:22px;color:#1a1a1a;font-weight:normal;font-family:'Liberation Serif', serif;letter-spacing:-0.33px;">2017</div>
<div class="t" style="left:419.7px;top:488.4px;font-size:22px;line-height:22px;color:#1a1a1a;font-weight:normal;font-family:'Liberation Serif', serif;letter-spacing:-0.28px;">62.64</div>
<div class="t" style="left:92.2px;top:519.6px;font-size:22px;line-height:22px;color:#1a1a1a;font-weight:normal;font-family:'Liberation Serif', serif;letter-spacing:-0.33px;">2018</div>
<div class="t" style="left:419.7px;top:519.6px;font-size:22px;line-height:22px;color:#1a1a1a;font-weight:normal;font-family:'Liberation Serif', serif;letter-spacing:-0.28px;">75.78</div>
<div class="t" style="left:92.2px;top:550.7px;font-size:22px;line-height:22px;color:#1a1a1a;font-weight:normal;font-family:'Liberation Serif', serif;letter-spacing:-0.33px;">2019</div>
<div class="t" style="left:92.2px;top:581.8px;font-size:22px;line-height:22px;color:#1a1a1a;font-weight:normal;font-family:'Liberation Serif', serif;letter-spacing:-0.33px;">2020</div>
<div class="b" style="left:40.3px;top:637.4px;width:518.2px;height:1.2px;background:#8a9fd2"></div>
<div class="b" style="left:49.0px;top:618.3px;width:13.8px;height:13.3px;background:#e7e9f1;border:1.2px solid #a9adc2;border-radius:2px;box-sizing:border-box"></div>
<div class="b" style="left:51.9px;top:624.5px;width:8.0px;height:1.3px;background:#4a5064"></div>
<div class="t" style="left:65.9px;top:612.1px;font-size:23px;line-height:23px;color:#111;font-weight:bold;font-family:'Liberation Serif', serif;letter-spacing:0px;transform:scaleX(1.0084);transform-origin:0 0;">Agriculture</div>
<div class="t" style="left:92.2px;top:644.1px;font-size:22px;line-height:22px;color:#1a1a1a;font-weight:normal;font-family:'Liberation Serif', serif;letter-spacing:-0.33px;">2015</div>
<div class="t" style="left:92.2px;top:675.3px;font-size:22px;line-height:22px;color:#1a1a1a;font-weight:normal;font-family:'Liberation Serif', serif;letter-spacing:-0.33px;">2016</div>
<div class="t" style="left:92.2px;top:706.4px;font-size:22px;line-height:22px;color:#1a1a1a;font-weight:normal;font-family:'Liberation Serif', serif;letter-spacing:-0.33px;">2017</div>
<div class="t" style="left:92.2px;top:737.5px;font-size:22px;line-height:22px;color:#1a1a1a;font-weight:normal;font-family:'Liberation Serif', serif;letter-spacing:-0.33px;">2018</div>
<div class="t" style="left:92.2px;top:768.7px;font-size:22px;line-height:22px;color:#1a1a1a;font-weight:normal;font-family:'Liberation Serif', serif;letter-spacing:-0.33px;">2019</div>
<div class="t" style="left:419.7px;top:768.7px;font-size:22px;line-height:22px;color:#1a1a1a;font-weight:normal;font-family:'Liberation Serif', serif;letter-spacing:-0.28px;">68.63</div>
<div class="t" style="left:92.2px;top:799.8px;font-size:22px;line-height:22px;color:#1a1a1a;font-weight:normal;font-family:'Liberation Serif', serif;letter-spacing:-0.33px;">2020</div>
<div class="t" style="left:419.7px;top:799.8px;font-size:22px;line-height:22px;color:#1a1a1a;font-weight:normal;font-family:'Liberation Serif', serif;letter-spacing:-0.28px;">66.89</div>
<div class="b" style="left:40.3px;top:855.4px;width:518.2px;height:1.2px;background:#8a9fd2"></div>
<div class="b" style="left:49.0px;top:836.3px;width:13.8px;height:13.3px;background:#e7e9f1;border:1.2px solid #a9adc2;border-radius:2px;box-sizing:border-box"></div>
<div class="b" style="left:51.9px;top:842.5px;width:8.0px;height:1.3px;background:#4a5064"></div>
<div class="t" style="left:67.0px;top:830.1px;font-size:23px;line-height:23px;color:#111;font-weight:bold;font-family:'Liberation Serif', serif;letter-spacing:0px;transform:scaleX(1.0162);transform-origin:0 0;">Athletic Training</div>
<div class="t" style="left:416.8px;top:830.5px;font-size:22.5px;line-height:22.5px;color:#111;font-weight:bold;font-family:'Liberation Serif', serif;letter-spacing:0px;transform:scaleX(1.0706);transform-origin:0 0;">66.41</div>
<div class="t" style="left:92.2px;top:862.1px;font-size:22px;line-height:22px;color:#1a1a1a;font-weight:normal;font-family:'Liberation Serif', serif;letter-spacing:-0.33px;">2015</div>
<div class="t" style="left:419.7px;top:862.1px;font-size:22px;line-height:22px;color:#1a1a1a;font-weight:normal;font-family:'Liberation Serif', serif;letter-spacing:-0.28px;">66.53</div>
<div class="t" style="left:92.2px;top:893.2px;font-size:22px;line-height:22px;color:#1a1a1a;font-weight:normal;font-family:'Liberation Serif', serif;letter-spacing:-0.33px;">2016</div>
<div class="t" style="left:419.7px;top:893.2px;font-size:22px;line-height:22px;color:#1a1a1a;font-weight:normal;font-family:'Liberation Serif', serif;letter-spacing:-0.28px;">66.74</div>
<div class="t" style="left:92.2px;top:924.4px;font-size:22px;line-height:22px;color:#1a1a1a;font-weight:normal;font-family:'Liberation Serif', serif;letter-spacing:-0.33px;">2017</div>
<div class="t" style="left:419.7px;top:924.4px;font-size:22px;line-height:22px;color:#1a1a1a;font-weight:normal;font-family:'Liberation Serif', serif;letter-spacing:-0.28px;">68.72</div>
<div class="t" style="left:92.2px;top:955.5px;font-size:22px;line-height:22px;color:#1a1a1a;font-weight:normal;font-family:'Liberation Serif', serif;letter-spacing:-0.33px;">2018</div>
<div class="t" style="left:419.7px;top:955.5px;font-size:22px;line-height:22px;color:#1a1a1a;font-weight:normal;font-family:'Liberation Serif', serif;letter-spacing:-0.28px;">63.64</div>
<div class="b" style="left:388.5px;top:534.0px;width:543.5px;height:222.6px;background:#fff"></div>
<div class="b" style="left:387.5px;top:533.0px;width:545.5px;height:2.2px;background:#4a6898"></div>
<div class="b" style="left:387.5px;top:533.0px;width:2.2px;height:224.6px;background:#4a6898"></div>
<div class="b" style="left:931.0px;top:533.0px;width:1.6px;height:224.6px;background:#555"></div>
<div class="b" style="left:387.5px;top:755.6px;width:545.5px;height:1.8px;background:#555"></div>
<div class="t" style="left:400.2px;top:543.0px;font-size:19.5px;line-height:19.5px;color:#111;font-weight:bold;font-family:'Liberation Sans', sans-serif;letter-spacing:0px;transform:scaleX(0.9386);transform-origin:0 0;">DATE</div>
<div class="b" style="left:397.6px;top:573.2px;width:521.4px;height:1.3px;background:#4472c4"></div>
<div class="t" style="left:399.4px;top:585.7px;font-size:18.5px;line-height:18.5px;color:#3b5ea0;font-weight:normal;font-family:'Liberation Sans', sans-serif;letter-spacing:0.1px;">All Periods</div>
<div class="t" style="left:844.3px;top:586.4px;font-size:18px;line-height:18px;color:#8a8a8a;font-weight:normal;font-family:'Liberation Sans', sans-serif;letter-spacing:0px;transform:scaleX(0.7965);transform-origin:0 0;">YEARS</div>
<svg class="b" style="left:902px;top:593px" width="11" height="7" viewBox="0 0 11 7"><path d="M0.5 0.5 h10 l-5 5.5 z" fill="#a0a0a0"/></svg>
<svg class="b" style="left:894px;top:540px" width="26" height="26" viewBox="0 0 26 26">
<path d="M2 2 h16 l-6 7 v8 l-3 -2 v-6 z" fill="#d4d4d4" stroke="#c0c0c0" stroke-width="1"/>
<path d="M14 14 l9 9 M23 14 l-9 9" stroke="#b0b0b0" stroke-width="1.6"/>
</svg>
<div class="t" style="left:400.7px;top:655.5px;font-size:17.5px;line-height:17.5px;color:#7f7f7f;font-weight:normal;font-family:'Liberation Sans', sans-serif;letter-spacing:-0.71px;">2015</div>
<div class="t" style="left:484.9px;top:655.5px;font-size:17.5px;line-height:17.5px;color:#7f7f7f;font-weight:normal;font-family:'Liberation Sans', sans-serif;letter-spacing:-0.71px;">2016</div>
<div class="t" style="left:569.1px;top:655.5px;font-size:17.5px;line-height:17.5px;color:#7f7f7f;font-weight:normal;font-family:'Liberation Sans', sans-serif;letter-spacing:-0.71px;">2017</div>
<div class="t" style="left:653.3px;top:655.5px;font-size:17.5px;line-height:17.5px;color:#7f7f7f;font-weight:normal;font-family:'Liberation Sans', sans-serif;letter-spacing:-0.71px;">2018</div>
<div class="t" style="left:737.5px;top:655.5px;font-size:17.5px;line-height:17.5px;color:#7f7f7f;font-weight:normal;font-family:'Liberation Sans', sans-serif;letter-spacing:-0.71px;">2019</div>
<div class="t" style="left:821.7px;top:655.5px;font-size:17.5px;line-height:17.5px;color:#7f7f7f;font-weight:normal;font-family:'Liberation Sans', sans-serif;letter-spacing:-0.71px;">2020</div>
<div class="b" style="left:398.9px;top:681.0px;width:448.0px;height:27.0px;background:linear-gradient(#acc2e6 0%,#a6bde6 30%,#8aa6dc 55%,#5f88d0 82%,#4d76c6 100%)"></div>
<div class="b" style="left:482.2px;top:681.0px;width:1.1px;height:27.0px;background:linear-gradient(rgba(90,110,150,0.45) 0%,rgba(90,110,150,0.3) 50%,rgba(200,220,255,0.6) 60%,rgba(200,220,255,0.6) 100%)"></div>
<div class="b" style="left:566.0px;top:681.0px;width:1.1px;height:27.0px;background:linear-gradient(rgba(90,110,150,0.45) 0%,rgba(90,110,150,0.3) 50%,rgba(200,220,255,0.6) 60%,rgba(200,220,255,0.6) 100%)"></div>
<div class="b" style="left:649.8px;top:681.0px;width:1.1px;height:27.0px;background:linear-gradient(rgba(90,110,150,0.45) 0%,rgba(90,110,150,0.3) 50%,rgba(200,220,255,0.6) 60%,rgba(200,220,255,0.6) 100%)"></div>
<div class="b" style="left:733.6px;top:681.0px;width:1.1px;height:27.0px;background:linear-gradient(rgba(90,110,150,0.45) 0%,rgba(90,110,150,0.3) 50%,rgba(200,220,255,0.6) 60%,rgba(200,220,255,0.6) 100%)"></div>
<div class="b" style="left:817.4px;top:681.0px;width:1.1px;height:27.0px;background:linear-gradient(rgba(90,110,150,0.45) 0%,rgba(90,110,150,0.3) 50%,rgba(200,220,255,0.6) 60%,rgba(200,220,255,0.6) 100%)"></div>
<div class="b" style="left:399.4px;top:718.5px;width:22.6px;height:24.3px;background:#fff;border:1px solid #c8c8c8;box-sizing:border-box"></div>
<svg class="b" style="left:405px;top:725px" width="10" height="12" viewBox="0 0 10 12"><path d="M8 1 v10 l-6 -5 z" fill="#555"/></svg>
<div class="b" style="left:424.0px;top:724.7px;width:440.0px;height:11.2px;background:#dbe3ef"></div>
<div class="b" style="left:381.0px;top:526.5px;width:15px;height:15px;border:2.4px solid #5f5f5f;border-radius:50%;background:#fff;box-sizing:border-box"></div>
<div class="b" style="left:651.8px;top:526.5px;width:15px;height:15px;border:2.4px solid #5f5f5f;border-radius:50%;background:#fff;box-sizing:border-box"></div>
<div class="b" style="left:924.5px;top:526.5px;width:15px;height:15px;border:2.4px solid #5f5f5f;border-radius:50%;background:#fff;box-sizing:border-box"></div>
<div class="b" style="left:381.0px;top:636.7px;width:15px;height:15px;border:2.4px solid #5f5f5f;border-radius:50%;background:#fff;box-sizing:border-box"></div>
<div class="b" style="left:381.0px;top:749.1px;width:15px;height:15px;border:2.4px solid #5f5f5f;border-radius:50%;background:#fff;box-sizing:border-box"></div>
<div class="b" style="left:651.8px;top:749.1px;width:15px;height:15px;border:2.4px solid #5f5f5f;border-radius:50%;background:#fff;box-sizing:border-box"></div>
<div class="b" style="left:924.5px;top:749.1px;width:15px;height:15px;border:2.4px solid #5f5f5f;border-radius:50%;background:#fff;box-sizing:border-box"></div>
<div class="b" style="left:924.5px;top:636.7px;width:15px;height:15px;border:2.4px solid #5f5f5f;border-radius:50%;background:#fff;box-sizing:border-box"></div>
<div class="b" style="left:845.7px;top:615.9px;width:185.7px;height:177.7px;background:#fff;border:1px solid #d6d6d6;border-radius:5px;box-sizing:border-box;box-shadow:0 2px 5px rgba(0,0,0,0.12)"></div>
<div class="b" style="left:847.7px;top:617.9px;width:181.3px;height:42.8px;background:#f5f5f5;border:3px solid #111;box-sizing:border-box"></div>
<svg class="b" style="left:864px;top:626px" width="30" height="23" viewBox="0 0 30 23"><path d="M3 12 l7 7 l16 -16" fill="none" stroke="#3d9b50" stroke-width="3"/></svg>
<div class="t" style="left:904.7px;top:628.5px;font-size:19.5px;line-height:19.5px;color:#262626;font-weight:normal;font-family:'Liberation Sans', sans-serif;letter-spacing:0px;transform:scaleX(0.8018);transform-origin:0 0;">YEARS</div>
<div class="t" style="left:904.7px;top:671.9px;font-size:19.5px;line-height:19.5px;color:#262626;font-weight:normal;font-family:'Liberation Sans', sans-serif;letter-spacing:0px;transform:scaleX(0.8238);transform-origin:0 0;">QUARTERS</div>
<div class="t" style="left:904.7px;top:715.6px;font-size:19.5px;line-height:19.5px;color:#262626;font-weight:normal;font-family:'Liberation Sans', sans-serif;letter-spacing:0px;transform:scaleX(0.9251);transform-origin:0 0;">MONTHS</div>
<div class="t" style="left:904.7px;top:759.1px;font-size:19.5px;line-height:19.5px;color:#262626;font-weight:normal;font-family:'Liberation Sans', sans-serif;letter-spacing:0px;transform:scaleX(0.8766);transform-origin:0 0;">DAYS</div>
</body></html>
